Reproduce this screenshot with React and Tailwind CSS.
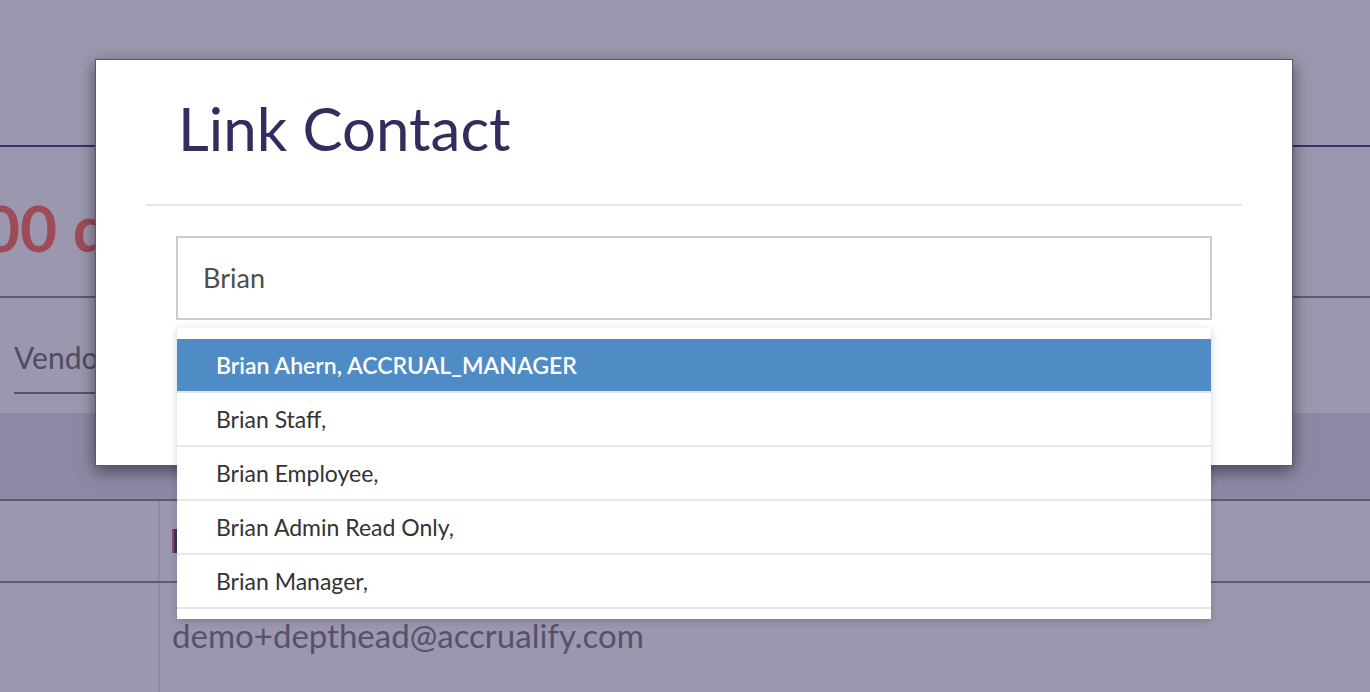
import React from 'react';

const contacts = [
    { name: 'Brian Ahern', role: 'ACCRUAL_MANAGER' },
    { name: 'Brian Staff', role: '' },
    { name: 'Brian Employee', role: '' },
    { name: 'Brian Admin Read Only', role: '' },
    { name: 'Brian Manager', role: '' },
];

const font = { fontFamily: 'Lato, "Open Sans", sans-serif' };

// page underneath the modal backdrop
const Backdrop = () => (
    <div className="w-full h-[692px] overflow-hidden bg-[#9b97ae]" style={font}>
        <div className="h-[147px] border-b-2 border-[#393465]"></div>
        <div className="h-[151px] border-b-2 border-[#5d5a72] flex items-center overflow-hidden">
            <span className="-ml-[17px] mt-[12px] text-[64px] font-bold text-[#9e4b59] leading-none whitespace-nowrap">00 days</span>
        </div>
        <div className="h-[115px] pl-[14px] pt-[44px]">
            <div className="inline-block w-[140px] border-b-2 border-[#57536e] pb-[20px] text-[30px] text-[#4f4a68] leading-none">Vendor</div>
        </div>
        <div className="h-[88px] bg-[#8c88a6] border-b-2 border-[#5d5a72]"></div>
        <div className="flex h-[82px] border-b-2 border-[#5d5a72]">
            <div className="w-[160px] border-r-2 border-[#8f8ba4]"></div>
            <div className="pl-[12px] pt-[28px]">
                <div className="w-[6px] h-[24px] bg-[#3d3466] border-l-2 border-[#8e4a5a]"></div>
            </div>
        </div>
        <div className="flex h-[110px]">
            <div className="w-[160px] border-r-2 border-[#8f8ba4]"></div>
            <div className="pl-[12px] pt-[36px] text-[33px] text-[#56516f] leading-none whitespace-nowrap">demo+depthead@accrualify.com</div>
        </div>
    </div>
);

const ContactDropdown = () => (
    <div className="absolute left-[81px] right-[81px] top-[268px] h-[291px] overflow-hidden bg-white pt-[11px] shadow-[0_2px_8px_rgba(0,0,0,0.18)]">
        {contacts.map((c, index) => (
            <div
                key={index}
                className={
                    index === 0
                        ? 'h-[54px] flex items-center pl-[39px] bg-[#4f8bc5] text-white font-semibold border-b-2 border-[#e6e6e6]'
                        : 'h-[54px] flex items-center pl-[39px] text-[#333] border-b-2 border-[#e6e6e6]'
                }
            >
                <span className="text-[23px] leading-none">{c.name}, {c.role}</span>
            </div>
        ))}
    </div>
);

export default function App() {
    return (
        <div className="relative w-[1370px] h-[692px] overflow-hidden">
            <Backdrop />
            <div
                className="absolute left-[95px] top-[59px] w-[1198px] h-[407px] bg-white border border-[#5a576c] shadow-[0_5px_15px_rgba(0,0,0,0.5)]"
                style={font}
            >
                <div className="mx-[50px] h-[146px] border-b-2 border-[#e5e5e5] pl-[32px] pt-[38px]">
                    <h1 className="text-[60px] leading-none text-[#332d5e]">Link Contact</h1>
                </div>
                <div className="px-[80px] pt-[30px]">
                    <div className="h-[84px] border-2 border-[#cccccc] flex items-center pl-[25px] text-[27px] text-[#4d4d4d]">
                        Brian
                    </div>
                </div>
                <ContactDropdown />
            </div>
        </div>
    );
}
